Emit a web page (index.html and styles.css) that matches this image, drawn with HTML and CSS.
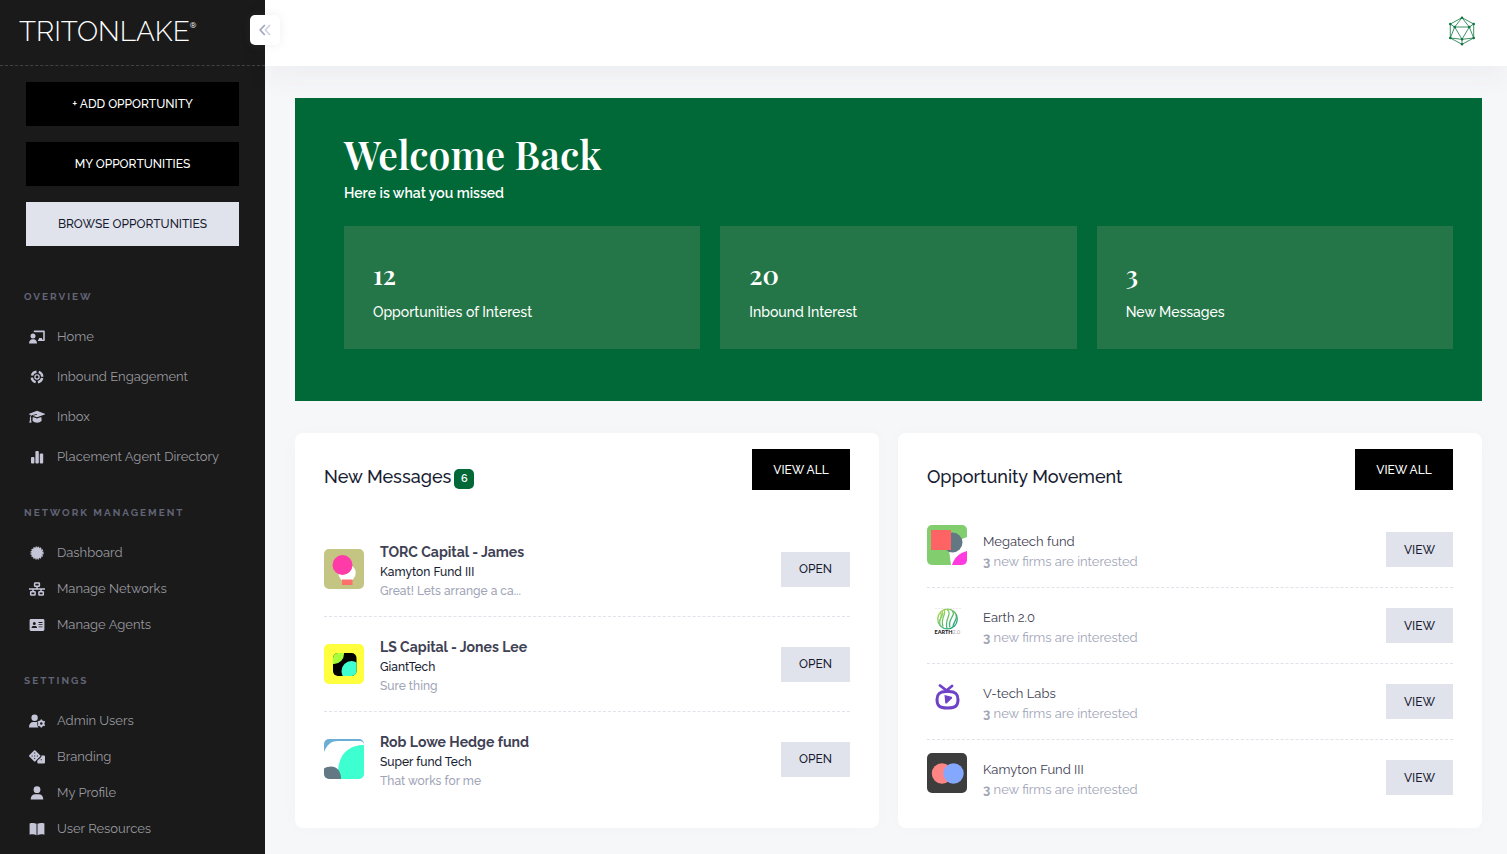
FILE: index.html
```html
<!DOCTYPE html>
<html lang="en">
<head>
<meta charset="utf-8">
<meta name="viewport" content="width=device-width, initial-scale=1">
<title>TritonLake Dashboard</title>
<link rel="stylesheet" href="styles.css">
</head>
<body>
<div class="app">
  <aside class="sidebar">
    <div class="brand">
      <a class="logo" href="#">TRITONLAKE<sup class="logo-mark">®</sup></a>
      <button class="collapse" type="button" aria-label="Collapse sidebar">
        <svg width="14" height="14" viewBox="0 0 14 14" fill="none" stroke-width="1.7"><path d="M6.8 2 2.2 7l4.600 5" stroke="#a1a5bf"/><path d="M12 2 7.400 7l4.600 5" stroke="#d0d2df"/></svg>
      </button>
    </div>
    <div class="actions">
      <button class="action" type="button">+ ADD OPPORTUNITY</button>
      <button class="action" type="button">MY OPPORTUNITIES</button>
      <button class="action action-light" type="button">BROWSE OPPORTUNITIES</button>
    </div>
    <nav class="nav">
      <section class="nav-group nav-roomy">
        <h2 class="nav-title">OVERVIEW</h2>
        <a class="nav-link" href="#"><svg class="nav-icon" viewBox="0 0 16 14"><path d="M5.500 2V1.400h9.500V10.200h-6" fill="none" stroke="currentColor" stroke-width="1.600" stroke-linejoin="round"/><path d="M10 8h3v2h-3z"/><circle cx="4" cy="6" r="2.500"/><path d="M0 13.400C0 11 1.500 9.300 3.500 9.300h1C6.600 9.300 8 11 8 13.400z"/></svg>Home</a>
        <a class="nav-link" href="#"><svg class="nav-icon" viewBox="0 0 16 14"><circle cx="8" cy="7" r="5.300" fill="none" stroke="currentColor" stroke-width="2.400" stroke-dasharray="6 2.325" stroke-dashoffset="-1.163"/><circle cx="8" cy="7" r="2.100" fill="none" stroke="currentColor" stroke-width="1.300"/></svg>Inbound Engagement</a>
        <a class="nav-link" href="#"><svg class="nav-icon" viewBox="0 0 16 14"><path d="M8 .8 15.700 3.700a.4.4 0 0 1 0 .8L8 7.300 3.600 5.700 8 4.800V4L2.700 5.200c-.6.600-.9 1.500-.9 2.300.6.400.6 1.100.1 1.500l.7 3.600-2.300.2.800-3.800c-.5-.4-.5-1.100.1-1.500 0-1 .2-1.800.7-2.500L.3 4.500a.4.4 0 0 1 0-.8z"/><path d="m3.800 7 4.200 1.500L12.300 7l.4 3.800c-2.200 2.600-7 2.600-9.200 0z"/></svg>Inbox</a>
        <a class="nav-link" href="#"><svg class="nav-icon" viewBox="0 0 16 14"><rect x="2" y="7" width="3.400" height="6.500" rx="1"/><rect x="6.400" y="1" width="3.400" height="12.500" rx="1"/><rect x="10.800" y="3.500" width="3.400" height="10" rx="1"/></svg>Placement Agent Directory</a>
      </section>
      <section class="nav-group">
        <h2 class="nav-title">NETWORK MANAGEMENT</h2>
        <a class="nav-link" href="#"><svg class="nav-icon" viewBox="0 0 16 14"><circle cx="8" cy="7" r="5.700"/><circle cx="8" cy="7" r="5.900" fill="none" stroke="currentColor" stroke-width="1.400" stroke-dasharray="1.500 .817"/></svg>Dashboard</a>
        <a class="nav-link" href="#"><svg class="nav-icon" viewBox="0 0 16 14"><g fill="none" stroke="currentColor" stroke-width="1.500"><rect x="5.600" y="1.100" width="4.800" height="3.200" rx=".5"/><rect x="1.700" y="9.700" width="4.400" height="3.200" rx=".5"/><rect x="9.900" y="9.700" width="4.400" height="3.200" rx=".5"/><path d="M0 7h16M8 4.300V7M4 7v2.700M12 7v2.700"/></g></svg>Manage Networks</a>
        <a class="nav-link" href="#"><svg class="nav-icon" viewBox="0 0 16 14"><path fill-rule="evenodd" d="M2 1h12a1.400 1.400 0 0 1 1.400 1.400v9.200A1.400 1.400 0 0 1 14 13H2a1.400 1.400 0 0 1-1.400-1.400V2.400A1.400 1.400 0 0 1 2 1zm3.300 3a1.500 1.500 0 1 0 0 3 1.500 1.500 0 0 0 0-3zM2.600 10h5.400c0-1.400-.8-2-2-2H4.600c-1.200 0-2 .6-2 2zM9.500 4v.9h4V4zm0 2.200v.9h4v-.9zm0 2.200v.9h4v-.9z"/></svg>Manage Agents</a>
      </section>
      <section class="nav-group">
        <h2 class="nav-title">SETTINGS</h2>
        <a class="nav-link" href="#"><svg class="nav-icon" viewBox="0 0 16 14"><circle cx="5.600" cy="3.700" r="3.200"/><path d="M0 13.500c0-3.500 1.700-5.400 4.500-5.400h2c.8 0 1.400.1 2 .5-.7 1.900-.3 3.600 1 4.900z"/><circle cx="12.300" cy="9.500" r="2.200" fill="none" stroke="currentColor" stroke-width="1.900"/><path d="M12.300 5.400v1.700m0 4.800v1.700m-3.500-6.100 1.400.8m4.200 2.400 1.400.8m0-4-1.400.8m-4.200 2.400-1.400.8" stroke="currentColor" stroke-width="1.500"/></svg>Admin Users</a>
        <a class="nav-link" href="#"><svg class="nav-icon" viewBox="0 0 16 14"><path fill-rule="evenodd" d="M5 .5a1 1 0 0 1 1.400 0l4.700 4.700a1 1 0 0 1 0 1.400l-4.700 4.700a1 1 0 0 1-1.400 0L.3 6.600a1 1 0 0 1 0-1.400zM5.200 2.600v1h1v-1zM2.600 5.400v1h1v-1zm2.600 0v1h1v-1zm2.700 0v1h1v-1zM5.200 8.100v1h1v-1z"/><path fill-rule="evenodd" d="M12.300 5.400H15a1 1 0 0 1 1 1v6.200a1 1 0 0 1-1 1H9.300a1 1 0 0 1-1-1v-1.900L12 7.300c.5-.5.600-1.200.3-1.900zM11.700 9.200v1h1v-1z"/></svg>Branding</a>
        <a class="nav-link" href="#"><svg class="nav-icon" viewBox="0 0 16 14"><circle cx="8" cy="3.700" r="3.400"/><path d="M1.700 13.500c0-3.400 2-5.200 4.800-5.200h3c2.800 0 4.800 1.800 4.800 5.200z"/></svg>My Profile</a>
        <a class="nav-link" href="#"><svg class="nav-icon" viewBox="0 0 16 14"><path d="M.6 1.600C3.200.8 5.600 1 7.500 1.800v11.400C5.600 12.300 3.200 12 .6 12.800zM15.400 1.600C12.800.8 10.400 1 8.500 1.800v11.400c1.900-.9 4.300-1.200 6.900-.4z"/></svg>User Resources</a>
      </section>
    </nav>
  </aside>

  <div class="page">
    <header class="topbar">
      <a class="account" href="#" aria-label="Account">
        <svg width="28" height="30" viewBox="0 0 28 30" stroke="#0f7540" stroke-width=".8" fill="none"><path d="M14 1.700 2.300 8v14L14 28.300 25.700 22V8zM6.700 11h14.600L14 23.300zM14 1.700 6.700 11 2.300 22 14 23.300 25.700 22 21.300 11zM2.300 8l4.400 3M25.700 8l-4.400 3M14 23.300v5"/><path d="M14 1.700h0M2.300 8h0M2.300 22h0M14 28.300h0M25.700 22h0M25.700 8h0M6.700 11h0M21.300 11h0M14 23.300h0" stroke-width="2.600" stroke-linecap="round"/></svg>
      </a>
    </header>
    <main class="content">
      <section class="hero">
        <h1 class="hero-title">Welcome Back</h1>
        <p class="hero-sub">Here is what you missed</p>
        <div class="stats">
          <div class="stat"><strong class="stat-value">12</strong><span class="stat-label">Opportunities of Interest</span></div>
          <div class="stat"><strong class="stat-value">20</strong><span class="stat-label">Inbound Interest</span></div>
          <div class="stat"><strong class="stat-value">3</strong><span class="stat-label">New Messages</span></div>
        </div>
      </section>

      <div class="panels">
        <section class="panel">
          <div class="panel-head">
            <h2 class="panel-title">New Messages <span class="badge">6</span></h2>
            <button class="view-all" type="button">VIEW ALL</button>
          </div>
          <ul class="list messages">
            <li class="row">
              <svg class="avatar" viewBox="0 0 40 40"><rect width="40" height="40" fill="#c4c582"/><circle cx="23" cy="24" r="8.700" fill="#fff"/><circle cx="18.500" cy="16" r="10" fill="#ff3ba7"/><path d="M18 30.500h10.500V36H18z" fill="#ff6f6b"/></svg>
              <div class="row-text"><strong class="sender">TORC Capital - James</strong><span class="subject">Kamyton Fund III</span><span class="preview">Great! Lets arrange a ca...</span></div>
              <button class="row-button" type="button">OPEN</button>
            </li>
            <li class="row">
              <svg class="avatar" viewBox="0 0 40 40"><defs><clipPath id="tile"><rect x="9" y="9" width="23.500" height="23" rx="5"/></clipPath></defs><rect width="40" height="40" fill="#ffff3d"/><g clip-path="url(#tile)"><path d="M9 9h24v24H9z"/><circle cx="10" cy="10" r="10" fill="#a7ff3b"/><circle cx="27.500" cy="27" r="10" fill="#3dffd0"/></g></svg>
              <div class="row-text"><strong class="sender">LS Capital - Jones Lee</strong><span class="subject">GiantTech</span><span class="preview">Sure thing</span></div>
              <button class="row-button" type="button">OPEN</button>
            </li>
            <li class="row">
              <svg class="avatar" viewBox="0 0 40 40"><path d="M0 0h40v13H0z" fill="#6aadd5"/><path d="M0 13C3 5 8 2 14 2h22c2 0 3 1 4 2.500V40H0z" fill="#fff"/><path d="M40 6C24 6 14 16 14 34v6h26z" fill="#3dffd0"/><path d="M0 29.500C8 25 17 28 17 40H0z" fill="#647884"/></svg>
              <div class="row-text"><strong class="sender">Rob Lowe Hedge fund</strong><span class="subject">Super fund Tech</span><span class="preview">That works for me</span></div>
              <button class="row-button" type="button">OPEN</button>
            </li>
          </ul>
        </section>

        <section class="panel">
          <div class="panel-head">
            <h2 class="panel-title">Opportunity Movement</h2>
            <button class="view-all" type="button">VIEW ALL</button>
          </div>
          <ul class="list movement">
            <li class="row">
              <svg class="avatar" viewBox="0 0 40 40"><rect width="40" height="40" fill="#82cd6e"/><path d="M40 12v28H24l-2-15 13-11z" fill="#fff"/><circle cx="25.500" cy="17.500" r="10" fill="#647884"/><path d="M4 5h20v20H4z" fill="#ff6363"/><path d="M40 26v14H25c2-7 7-12 15-14z" fill="#ff3be0"/></svg>
              <div class="row-text"><span class="firm">Megatech fund</span><span class="interest"><b>3</b> new firms are interested</span></div>
              <button class="row-button" type="button">VIEW</button>
            </li>
            <li class="row">
              <svg class="avatar" viewBox="0 0 40 40"><defs><linearGradient id="leaf" x1="0" y1="0" x2="1" y2="1"><stop offset="0" stop-color="#bbdf55"/><stop offset="1" stop-color="#079b82"/></linearGradient></defs><path d="M8 7.500h26" stroke="#ddd" stroke-width=".6" stroke-dasharray="2 1"/><g transform="translate(0 3.500)" fill="none" stroke="url(#leaf)" stroke-width="1.300"><circle cx="20.500" cy="14.500" r="9.800"/><path d="M13 8c4 3-2 6 0 13M17 5c3 5-4 8-1 17M20 5c6 5-3 9 0 19M25 6c5 5-5 8-2 17M29 10c2 5-3 8-3 12M12 16c4-4 4-7 3-10"/></g><text x="7.500" y="33" font-family="Lato, sans-serif" font-size="5.500" font-weight="900" fill="#222">EARTH<tspan fill="#aaa" font-weight="400">2.0</tspan></text></svg>
              <div class="row-text"><span class="firm">Earth 2.0</span><span class="interest"><b>3</b> new firms are interested</span></div>
              <button class="row-button" type="button">VIEW</button>
            </li>
            <li class="row">
              <svg class="avatar" viewBox="0 0 40 40"><g transform="translate(0 4)"><g fill="none" stroke="#6f42c8" stroke-linecap="round"><path d="M19 10.500h3c7 0 9 3 9 8 0 6-2 8.500-10.500 8.500S10 24.500 10 18.500c0-5 2-8 9-8z" stroke-width="3"/><path d="m13 4.500 6.500 5L25 5" stroke-width="2.800"/></g><path d="m17.500 14 7 1.800c.8.400.8 1 .3 1.600L20 22.300c-.8.500-1.700.3-1.800-.6z" fill="#6f42c8"/></g></svg>
              <div class="row-text"><span class="firm">V-tech Labs</span><span class="interest"><b>3</b> new firms are interested</span></div>
              <button class="row-button" type="button">VIEW</button>
            </li>
            <li class="row">
              <svg class="avatar" viewBox="0 0 40 40"><rect width="40" height="40" fill="#3d3d3d"/><circle cx="15" cy="20.500" r="10.200" fill="#ff8585"/><circle cx="26.500" cy="20.500" r="10.200" fill="#85a8ff"/></svg>
              <div class="row-text"><span class="firm">Kamyton Fund III</span><span class="interest"><b>3</b> new firms are interested</span></div>
              <button class="row-button" type="button">VIEW</button>
            </li>
          </ul>
        </section>
      </div>
    </main>
  </div>
</div>
</body>
</html>
```

FILE: styles.css
```css
* { box-sizing: border-box; }

body {
  margin: 0;
  background: #f6f7f9;
  color: #181c32;
  font-family: Raleway, Lato, sans-serif;
  font-size: 13px;
  line-height: 20px;
}

h1, h2, p, ul { margin: 0; padding: 0; }
a { color: inherit; text-decoration: none; }
button { border: 0; padding: 0; font: inherit; font-size: 12px; font-weight: 500; color: inherit; cursor: pointer; }

.app { display: flex; min-height: 100vh; }

/* Sidebar */
.sidebar { flex: 0 0 265px; background: #1a1a1a; }
.brand {
  position: relative;
  display: flex;
  align-items: center;
  height: 66px;
  padding: 0 19px 2px;
  border-bottom: 1px dashed #424246;
}
.logo { color: #fff; font-size: 28px; font-weight: 300; line-height: 32px; white-space: nowrap; }
.logo-mark { font-size: 8px; font-weight: 500; line-height: 8px; vertical-align: 13px; }
.collapse {
  position: absolute;
  top: 15px;
  right: -15px;
  display: flex;
  align-items: center;
  justify-content: center;
  width: 30px;
  height: 30px;
  border-radius: 5px;
  background: #fff;
  box-shadow: 0 0 10px rgba(113, 121, 136, .12);
}
.actions { display: flex; flex-direction: column; gap: 16px; padding: 16px 26px 0; }
.action { height: 44px; background: #000; color: #fff; }
.action-light { background: #e1e3ec; color: #181c32; }

.nav { padding: 41px 24px 0; }
.nav-group { display: flex; flex-direction: column; margin-bottom: 28px; }
.nav-group:last-child { margin-bottom: 8px; }
.nav-title { margin-bottom: 12px; color: #626477; font-size: 10px; font-weight: 700; letter-spacing: 2px; line-height: 20px; }
.nav-link { display: flex; align-items: center; gap: 12px; height: 36px; padding-left: 5px; color: #98989f; }
.nav-icon { width: 16px; height: 14px; color: #c5c5d8; fill: currentColor; }
.nav-roomy { margin-bottom: 26px; }
.nav-roomy .nav-title { margin-bottom: 10px; }
.nav-roomy .nav-link { height: 40px; }

/* Main column */
.page { flex: 1; min-width: 0; }
.topbar {
  display: flex;
  align-items: center;
  justify-content: flex-end;
  height: 66px;
  padding: 0 31px 4px;
  background: #fff;
  box-shadow: 0 10px 30px rgba(82, 63, 105, .05);
}
.account { display: flex; }
.content { padding: 32px 25px 24px 30px; }

.hero { padding: 36px 29px 52px 49px; background: #006937; color: #fff; }
.hero-title { font-family: "Playfair Display", "Liberation Serif", serif; font-size: 39px; font-weight: 600; line-height: 40px; }
.hero-sub { margin-top: 9px; font-size: 14px; font-weight: 600; }
.stats { display: grid; grid-template-columns: repeat(3, 1fr); gap: 20px; margin-top: 23px; }
.stat { display: flex; flex-direction: column; gap: 11px; padding: 33px 29px 27px; background: #247648; }
.stat-value { font-family: "Playfair Display", "Liberation Serif", serif; font-size: 26px; font-weight: 600; line-height: 32px; }
.stat-label { font-size: 14px; font-weight: 500; }

/* Panels */
.panels { display: grid; grid-template-columns: 1fr 1fr; gap: 19px; margin-top: 32px; }
.panel { padding: 16px 29px 12px; border-radius: 8px; background: #fff; box-shadow: 0 0 20px rgba(76, 87, 125, .02); }
.panel-head { display: flex; align-items: flex-start; justify-content: space-between; }
.panel-title { display: flex; gap: 3px; padding-top: 18px; font-size: 18px; font-weight: 500; }
.badge { width: 20px; height: 20px; margin-top: 2px; border-radius: 5px; background: #006937; color: #fff; font-size: 11px; font-weight: 600; font-variant-numeric: lining-nums; text-align: center; }
.view-all { width: 98px; height: 41px; background: #000; color: #fff; }

.list { list-style: none; }
.row { display: flex; align-items: center; gap: 16px; border-bottom: 1px dashed #e1e3ea; }
.row:last-child { border-bottom-color: transparent; }
.messages { padding-top: 32px; }
.messages .row { height: 95px; }
.movement { padding-top: 22px; }
.movement .row { height: 76px; }
.movement .avatar { align-self: flex-start; margin-top: 13px; }
.avatar { flex: none; width: 40px; height: 40px; border-radius: 5px; }
.row-text { display: flex; flex: 1; flex-direction: column; min-width: 0; padding-top: 4px; }
.sender { color: #3f4254; font-size: 14px; }
.subject { font-size: 12px; font-weight: 500; }
.preview { color: #a1a5b7; font-size: 12px; font-weight: 500; line-height: 18px; }
.firm { color: #3f4254; }
.interest { color: #a1a5b7; }
.row-button { width: 67px; height: 35px; background: #e1e3ec; color: #181c32; }
.messages .row-button { width: 69px; }
```
